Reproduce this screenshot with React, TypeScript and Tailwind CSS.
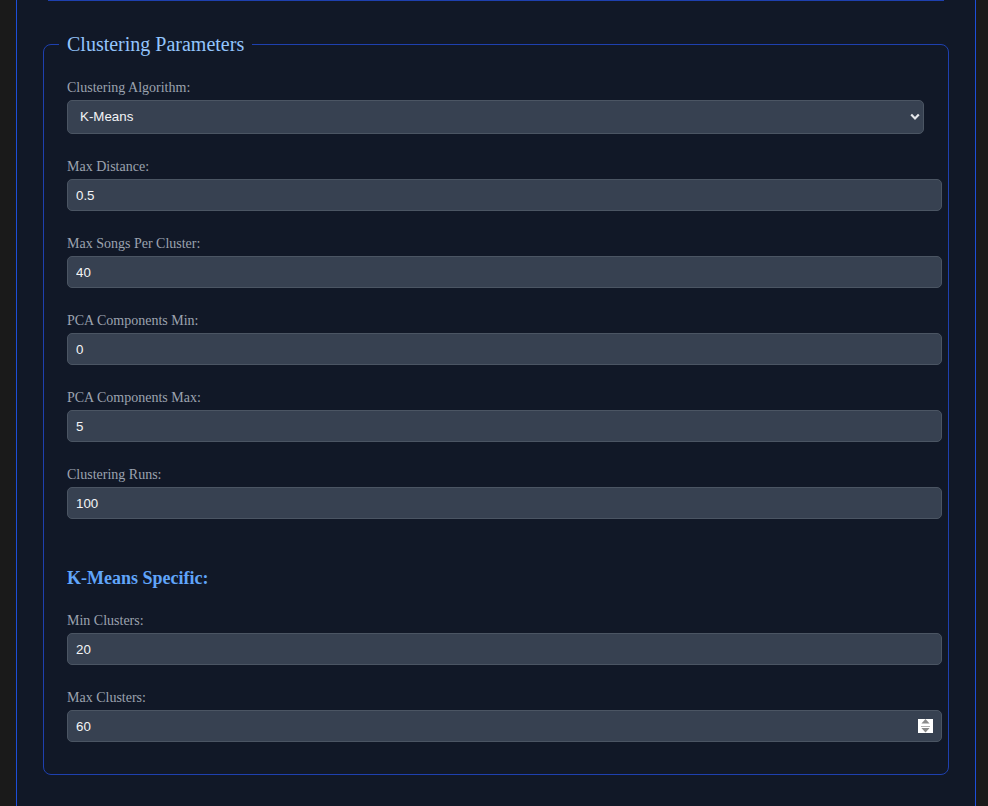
import React, { useState } from "react";

interface Field {
  id: string;
  label: string;
  value: string;
}

const generalFields: Field[] = [
  { id: "max-distance", label: "Max Distance:", value: "0.5" },
  { id: "max-songs", label: "Max Songs Per Cluster:", value: "40" },
  { id: "pca-min", label: "PCA Components Min:", value: "0" },
  { id: "pca-max", label: "PCA Components Max:", value: "5" },
  { id: "runs", label: "Clustering Runs:", value: "100" },
];

const kmeansFields: Field[] = [
  { id: "min-clusters", label: "Min Clusters:", value: "20" },
  { id: "max-clusters", label: "Max Clusters:", value: "60" },
];

const labelClass =
  "block pt-[1px] mb-[4px] text-[14px] leading-[16px] text-[#9ca3af] font-['Liberation_Serif',serif]";

const inputClass =
  "block box-content w-full h-[30px] pl-[8px] pr-[7px] py-0 bg-[#374151] border border-[#4b5563] rounded-[5px] text-[13.33px] text-[#f3f4f6] font-['Liberation_Sans',Arial,sans-serif] outline-none";

const Spinner = () => (
  <div className="absolute right-[-8px] top-[9px] w-[15px] h-[14px] bg-white flex flex-col items-center justify-center gap-[2px]">
    <svg width="9" height="5" viewBox="0 0 9 5">
      <path d="M4.5 0 L9 5 L0 5 Z" fill="#8a8a8a" />
    </svg>
    <div className="w-[9px] h-px bg-[#b0b0b0]" />
    <svg width="9" height="5" viewBox="0 0 9 5">
      <path d="M0 0 L9 0 L4.5 5 Z" fill="#8a8a8a" />
    </svg>
  </div>
);

const InputRow: React.FC<{ field: Field; spinner?: boolean }> = ({ field, spinner }) => {
  const [value, setValue] = useState(field.value);
  return (
    <div className="mb-[24px]">
      <label htmlFor={field.id} className={labelClass}>
        {field.label}
      </label>
      <div className="relative">
        <input
          id={field.id}
          type="text"
          value={value}
          onChange={(e) => setValue(e.target.value)}
          className={inputClass}
        />
        {spinner && <Spinner />}
      </div>
    </div>
  );
};

const App: React.FC = () => {
  const [algorithm, setAlgorithm] = useState("kmeans");

  return (
    <div className="min-h-[806px] bg-[#1a1a1a]">
      <div className="ml-[16px] w-[960px] min-h-[806px] bg-[#111827] border-x border-[#1d4ed8] px-[26px]">
        {/* bottom edge of the previous section */}
        <div className="mx-[5px] h-px bg-[#1e40af]" />

        <fieldset className="mt-[31px] border border-[#1e40af] rounded-[8px] px-[23px] pb-[8px]">
          <legend className="-ml-[8px] px-[8px] text-[20px] leading-[24px] text-[#93c5fd] font-['Liberation_Serif',serif]">
            Clustering Parameters
          </legend>

          <div className="mt-[23px] mb-[24px]">
            <label htmlFor="algorithm" className={labelClass}>
              Clustering Algorithm:
            </label>
            <div className="relative">
              <select
                id="algorithm"
                value={algorithm}
                onChange={(e) => setAlgorithm(e.target.value)}
                className="block w-[857px] h-[34px] appearance-none pl-[12px] pr-[24px] bg-[#374151] border border-[#4b5563] rounded-[5px] text-[13.33px] text-[#f3f4f6] font-['Liberation_Sans',Arial,sans-serif] outline-none"
              >
                <option value="kmeans">K-Means</option>
                <option value="dbscan">DBSCAN</option>
                <option value="gmm">Gaussian Mixture</option>
              </select>
              <svg
                className="absolute left-[843px] top-[13px] pointer-events-none"
                width="10"
                height="8"
                viewBox="0 0 10 8"
              >
                <path d="M1.2 1.5 L5 5.5 L8.8 1.5" fill="none" stroke="#e5e7eb" strokeWidth="2.2" />
              </svg>
            </div>
          </div>

          {generalFields.map((f) => (
            <InputRow key={f.id} field={f} />
          ))}

          <h3 className="mt-[48px] mb-[23px] text-[18px] leading-[22px] font-bold text-[#60a5fa] font-['Liberation_Serif',serif]">
            K-Means Specific:
          </h3>

          {kmeansFields.map((f, i) => (
            <InputRow key={f.id} field={f} spinner={i === kmeansFields.length - 1} />
          ))}
        </fieldset>
      </div>
    </div>
  );
};

export default App;
